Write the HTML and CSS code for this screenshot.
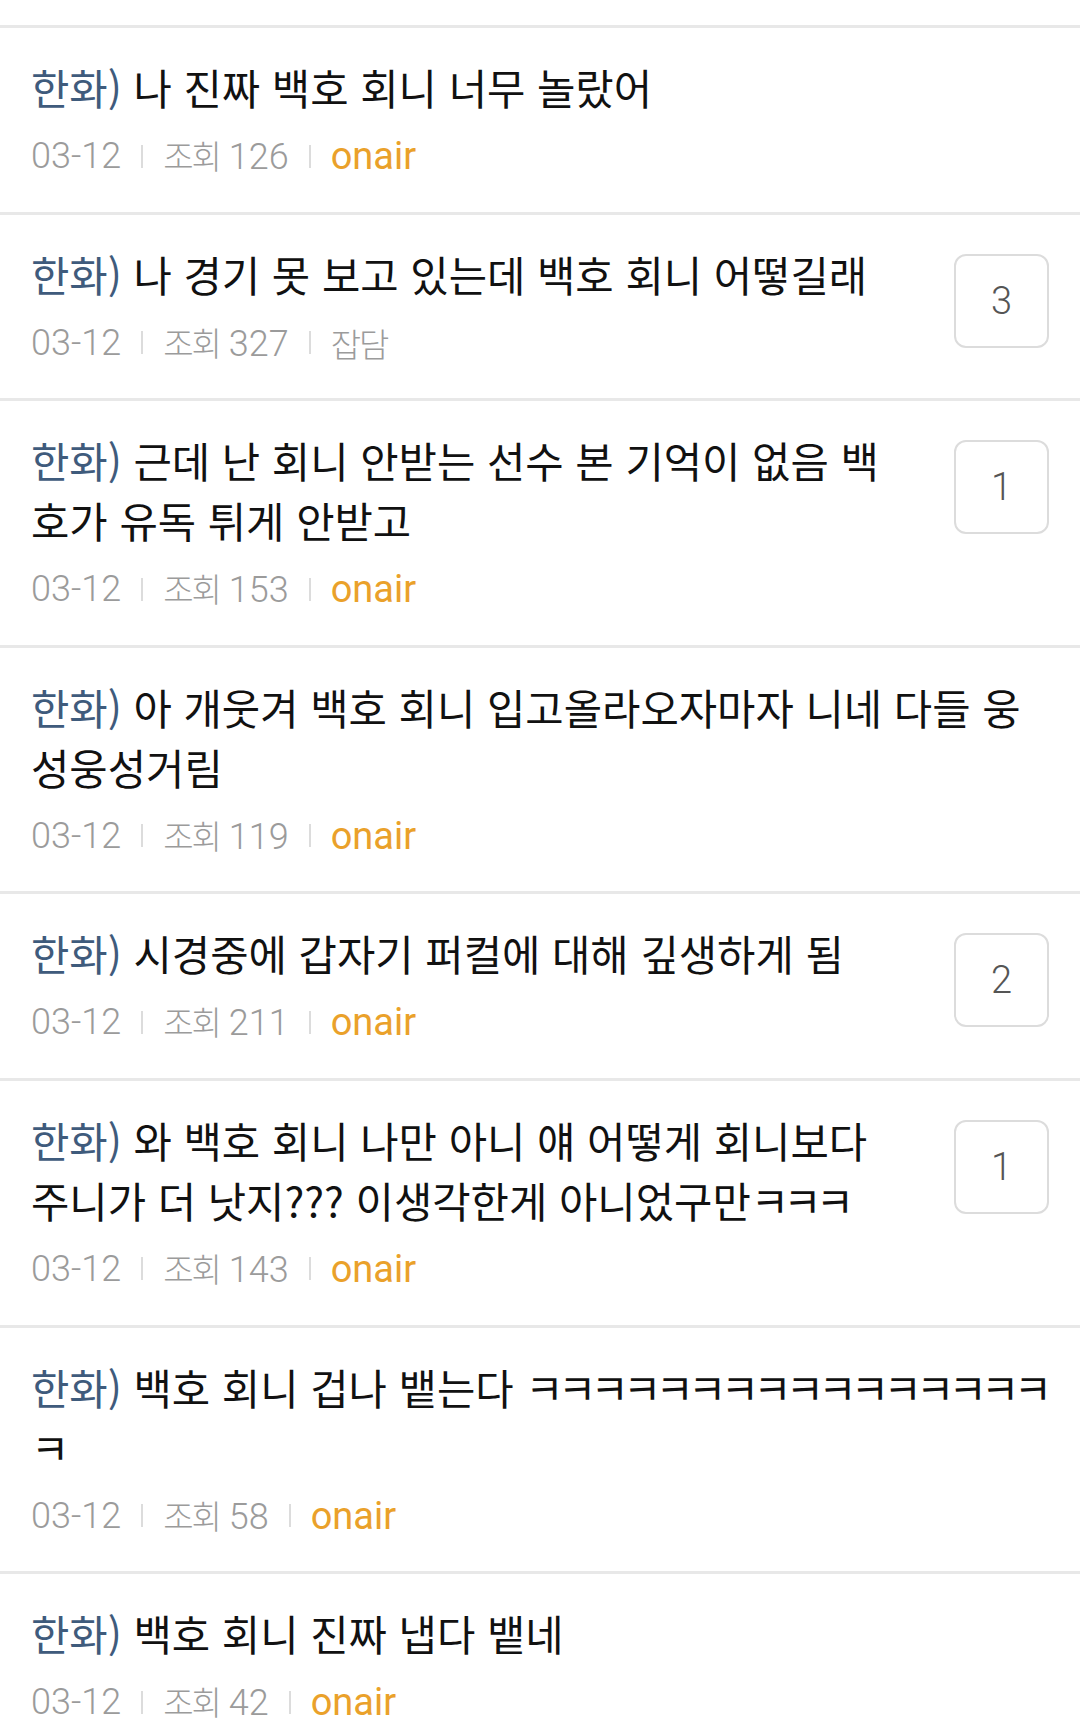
FILE: index.html
```html
<!DOCTYPE html>
<html lang="ko">
<head>
<meta charset="utf-8">
<title>게시글 목록</title>
<link rel="stylesheet" href="styles.css">
</head>
<body>
<ul class="list">
  <li class="item">
    <div class="body">
      <div class="title"><span class="tag">한화)</span> 나 진짜 백호 회니 너무 놀랐어</div>
      <div class="meta"><span>03-12</span><i class="bar"></i><span><b class="ko">조회</b> 126</span><i class="bar"></i><span class="cat">onair</span></div>
    </div>
  </li>
  <li class="item">
    <div class="body">
      <div class="title"><span class="tag">한화)</span> 나 경기 못 보고 있는데 백호 회니 어떻길래</div>
      <div class="meta"><span>03-12</span><i class="bar"></i><span><b class="ko">조회</b> 327</span><i class="bar"></i><span class="ko">잡담</span></div>
    </div>
    <div class="badge">3</div>
  </li>
  <li class="item">
    <div class="body">
      <div class="title"><span class="tag">한화)</span> 근데 난 회니 안받는 선수 본 기억이 없음 백<br>호가 유독 튀게 안받고</div>
      <div class="meta"><span>03-12</span><i class="bar"></i><span><b class="ko">조회</b> 153</span><i class="bar"></i><span class="cat">onair</span></div>
    </div>
    <div class="badge">1</div>
  </li>
  <li class="item">
    <div class="body">
      <div class="title"><span class="tag">한화)</span> 아 개웃겨 백호 회니 입고올라오자마자 니네 다들 웅<br>성웅성거림</div>
      <div class="meta"><span>03-12</span><i class="bar"></i><span><b class="ko">조회</b> 119</span><i class="bar"></i><span class="cat">onair</span></div>
    </div>
  </li>
  <li class="item">
    <div class="body">
      <div class="title"><span class="tag">한화)</span> 시경중에 갑자기 퍼컬에 대해 깊생하게 됨</div>
      <div class="meta"><span>03-12</span><i class="bar"></i><span><b class="ko">조회</b> 211</span><i class="bar"></i><span class="cat">onair</span></div>
    </div>
    <div class="badge">2</div>
  </li>
  <li class="item">
    <div class="body">
      <div class="title"><span class="tag">한화)</span> 와 백호 회니 나만 아니 얘 어떻게 회니보다<br>주니가 더 낫지??? 이생각한게 아니었구만<span class="kk">ㅋㅋㅋ</span></div>
      <div class="meta"><span>03-12</span><i class="bar"></i><span><b class="ko">조회</b> 143</span><i class="bar"></i><span class="cat">onair</span></div>
    </div>
    <div class="badge">1</div>
  </li>
  <li class="item">
    <div class="body">
      <div class="title"><span class="tag">한화)</span> 백호 회니 겁나 뱉는다 <span class="kk">ㅋㅋㅋㅋㅋㅋㅋㅋㅋㅋㅋㅋㅋㅋㅋㅋ</span><br><span class="kk">ㅋ</span></div>
      <div class="meta"><span>03-12</span><i class="bar"></i><span><b class="ko">조회</b> 58</span><i class="bar"></i><span class="cat">onair</span></div>
    </div>
  </li>
  <li class="item">
    <div class="body">
      <div class="title"><span class="tag">한화)</span> 백호 회니 진짜 냅다 뱉네</div>
      <div class="meta"><span>03-12</span><i class="bar"></i><span><b class="ko">조회</b> 42</span><i class="bar"></i><span class="cat">onair</span></div>
    </div>
  </li>
</ul>
</body>
</html>
```
FILE: styles.css
```css
html, body {
  margin: 0;
  padding: 0;
  background: #ffffff;
}

.list {
  list-style: none;
  margin: 0;
  padding: 25px 0 0 0;
}

.item {
  display: flex;
  align-items: flex-start;
  gap: 24px;
  border-top: 3px solid #e8e8e8;
  padding: 29px 31px 32.6px 31px;
}

.body {
  flex: 1;
  min-width: 0;
}

.title {
  font-family: "Noto Sans CJK KR", "Noto Sans", sans-serif;
  font-size: 41.7px;
  line-height: 60px;
  color: #111111;
  white-space: nowrap;
}

.tag {
  color: #3f5b7c;
}

.kk {
  letter-spacing: -5.8px;
}

.meta {
  margin-top: 16px;
  display: flex;
  align-items: center;
  height: 46px;
  font-family: Roboto, "Noto Sans CJK KR", sans-serif;
  font-weight: 300;
  font-size: 36px;
  line-height: 46px;
  color: #9b9b9b;
}

.ko {
  font-family: "Noto Sans CJK KR", sans-serif;
  font-weight: 300;
  font-size: 33px;
  letter-spacing: -2px;
}

.bar {
  display: inline-block;
  width: 2px;
  height: 23px;
  margin: 0 20px;
  background: #dcdcdc;
}

.cat {
  color: #eaa12a;
  font-weight: 400;
  font-size: 38px;
}

.badge {
  flex: none;
  box-sizing: border-box;
  width: 95px;
  height: 94px;
  margin-top: 10px;
  border: 2px solid #dcdcdc;
  border-radius: 12px;
  display: flex;
  align-items: center;
  justify-content: center;
  font-family: Roboto, sans-serif;
  font-weight: 300;
  font-size: 38px;
  color: #555555;
}
```
